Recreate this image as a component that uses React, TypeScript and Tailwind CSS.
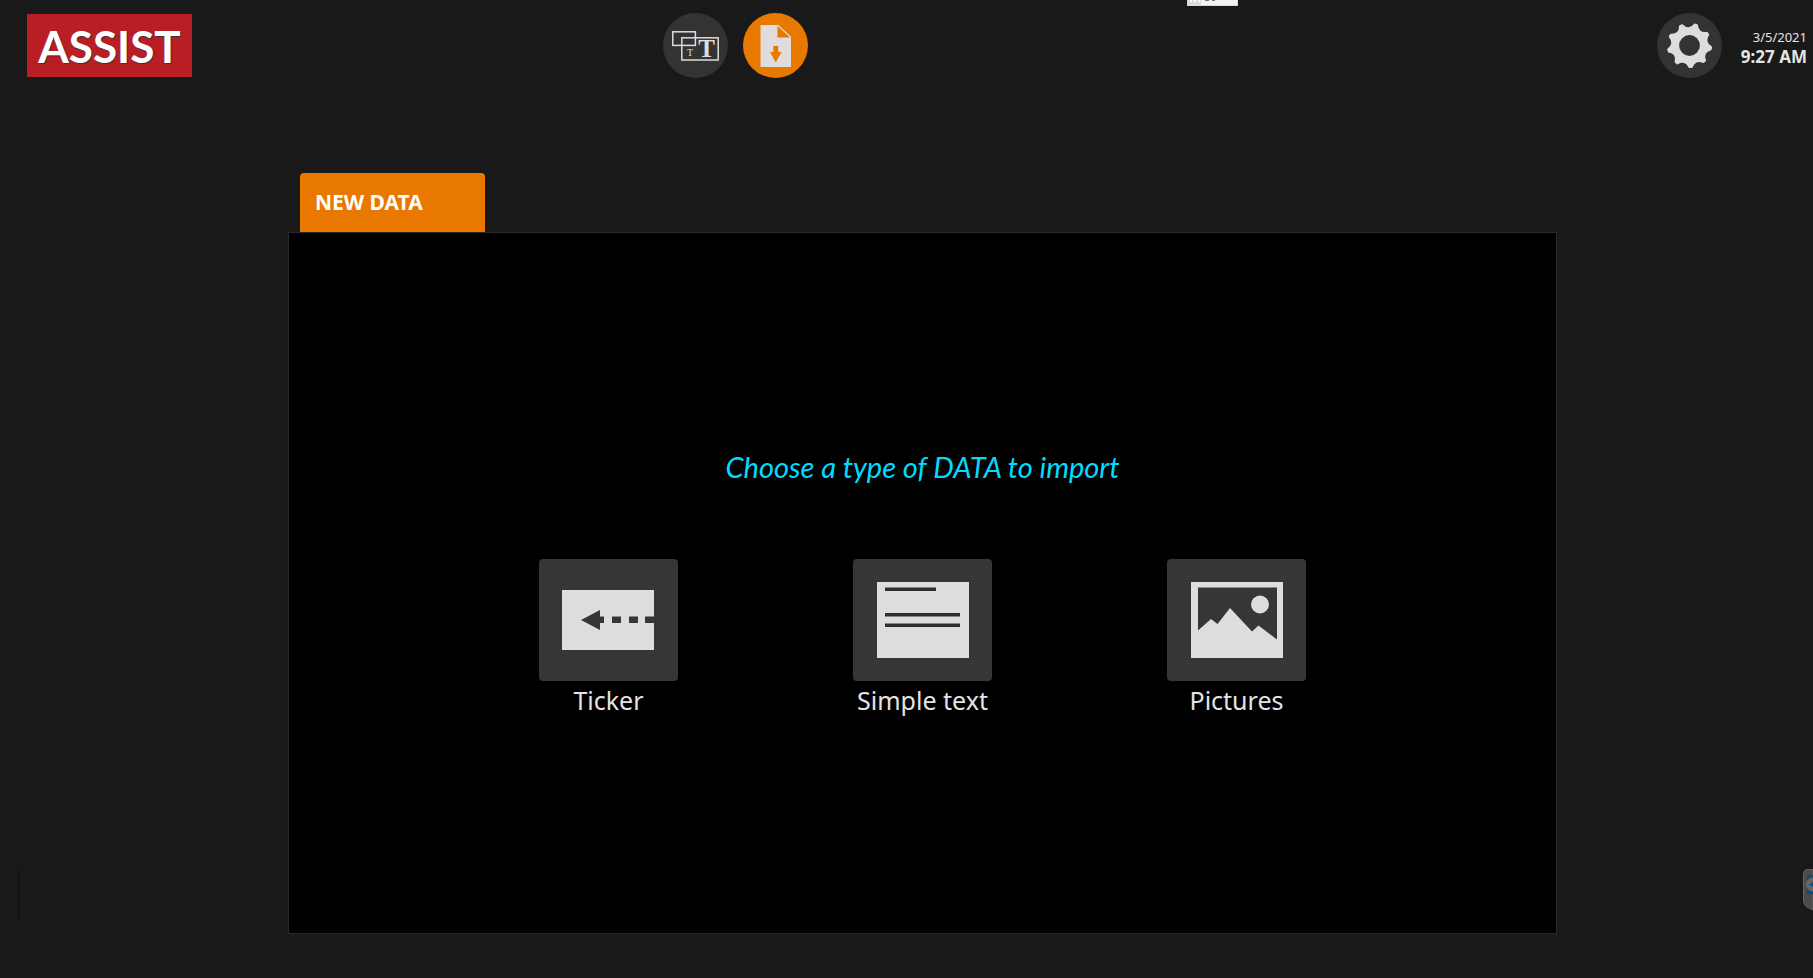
import type { ReactNode } from "react";

const GEAR_TEETH = 9;

function gearOutline(): string {
  const point = (degrees: number, radius: number) => {
    const a = (degrees * Math.PI) / 180;
    return `${(Math.cos(a) * radius).toFixed(2)} ${(Math.sin(a) * radius).toFixed(2)}`;
  };
  const step = 360 / GEAR_TEETH;
  let d = "";
  for (let i = 0; i < GEAR_TEETH; i++) {
    const tip = 87 + i * step;
    d += `${i === 0 ? "M" : "L"}${point(tip - 3, 21.6)}L${point(tip + 3, 21.6)}`;
    d += `C${point(tip + 12, 16.4)} ${point(tip + step - 12, 16.4)} ${point(tip + step - 3, 21.6)}`;
  }
  return d + "Z";
}

function LayersIcon() {
  return (
    <svg viewBox="0 0 65 65" className="size-full" aria-hidden="true">
      <g fill="none" stroke="#dedcdd" strokeWidth="1.5">
        <rect x="9.8" y="18.8" width="22.6" height="13.6" />
        <rect x="18.8" y="24.8" width="36.4" height="22.2" />
      </g>
      <g fill="#dedcdd" fontFamily="'Liberation Serif', serif" textAnchor="middle">
        <text x="27" y="43" fontSize="10">T</text>
        <text x="43.7" y="43.700" fontSize="25" fontWeight="bold">T</text>
      </g>
    </svg>
  );
}

function ImportIcon() {
  return (
    <svg viewBox="0 0 65 65" className="size-full" aria-hidden="true">
      <path d="M18 12H34.5V24.5H48V54H17.500V12Z" fill="#dedcdd" />
      <path d="M34.500 12L48 24.500" stroke="#dedcdd" strokeWidth="1.200" />
      <path d="M30.300 33H35.200V39H38.500L32.800 49.500L27 39H30.300Z" fill="#e87800" />
    </svg>
  );
}

function GearIcon() {
  return (
    <svg viewBox="-32.5 -32.5 65 65" className="size-full" aria-hidden="true">
      <path d={gearOutline()} fill="#dedcdd" stroke="#dedcdd" strokeWidth="2" strokeLinejoin="round" />
      <circle r="10.400" fill="#333333" />
    </svg>
  );
}

function TickerIcon() {
  return (
    <svg viewBox="0 0 139 122" className="size-full" aria-hidden="true">
      <rect x="23" y="31" width="92" height="60" fill="#dedcdd" />
      <path
        d="M42 61L61 51V57.500H65V64H61V71ZM73 57.500H82V64H73ZM90 57.500H99V64H90ZM106 57.500H115V64H106Z"
        fill="#363636"
      />
    </svg>
  );
}

function TextIcon() {
  return (
    <svg viewBox="0 0 139 122" className="size-full" aria-hidden="true">
      <rect x="24" y="23" width="92" height="76" fill="#dedcdd" />
      <path d="M32 28.500H83V32H32ZM32 54H107V57.500H32ZM32 64.500H107V68H32Z" fill="#302e2f" />
    </svg>
  );
}

function PictureIcon() {
  return (
    <svg viewBox="0 0 139 122" className="size-full" aria-hidden="true">
      <rect x="24" y="23" width="92" height="76" fill="#dedcdd" />
      <path d="M31 28.500H110V80.500L91.500 66.500L85 72.500L63 49L50.500 65L44 60L31 71.500Z" fill="#363636" />
      <circle cx="93" cy="45.5" r="9" fill="#dedcdd" />
    </svg>
  );
}

function RoundButton({ label, active, children }: { label: string; active?: boolean; children: ReactNode }) {
  return (
    <button
      type="button"
      aria-label={label}
      className={`size-[65px] shrink-0 overflow-hidden rounded-full ${active ? "bg-[#e87800]" : "bg-[#333333]"}`}
    >
      {children}
    </button>
  );
}

function DataType({ label, children }: { label: string; children: ReactNode }) {
  return (
    <button type="button" className="flex w-[139px] flex-col items-center text-[#e4e4e4]">
      <span className="h-[122px] w-full overflow-hidden rounded bg-[#363636]">{children}</span>
      <span className="whitespace-nowrap text-[25px] leading-[38px]">{label}</span>
    </button>
  );
}

export default function App() {
  return (
    <div className="relative flex min-h-screen flex-col overflow-hidden bg-[#191919] font-['Noto_Sans','Open_Sans',sans-serif]">
      <header className="grid grid-cols-[663fr_145px_1005fr] items-center pt-[13px]">
        <div className="pl-[27px]">
          <h1 className="flex h-[63px] w-[165px] items-center justify-center bg-[#ba1e25] font-['Lato',sans-serif] text-[44px] leading-none font-bold text-white [text-shadow:1px_1px_1px_#333]">
            ASSIST
          </h1>
        </div>
        <nav className="flex justify-between">
          <RoundButton label="Layouts">
            <LayersIcon />
          </RoundButton>
          <RoundButton label="Import data" active>
            <ImportIcon />
          </RoundButton>
        </nav>
        <div className="flex items-center justify-end gap-4 pr-[6px]">
          <RoundButton label="Settings">
            <GearIcon />
          </RoundButton>
          <div className="flex w-[69px] flex-col items-end pt-0.5 whitespace-nowrap text-[#e4e4e4]">
            <p className="text-[13px] leading-5">3/5/2021</p>
            <p className="text-[17px] leading-5 font-bold">9:27 AM</p>
          </div>
        </div>
      </header>

      <main className="grid flex-1 grid-cols-[288fr_1269fr_256fr] pt-[95px] pb-11">
        <section className="col-start-2 flex flex-col">
          <h2 className="ml-3 flex h-[59px] w-[185px] items-center rounded-t bg-[#e87800] px-[15px] text-[21px] font-bold text-white">
            NEW DATA
          </h2>
          <div className="flex flex-1 flex-col items-center border border-[#2a2a2a] bg-black pt-[214px]">
            <p className="font-['Lato',sans-serif] text-[29px] leading-10 text-[#00dcff] italic">
              Choose a type of DATA to import
            </p>
            <div className="mt-[72px] flex gap-[175px]">
              <DataType label="Ticker">
                <TickerIcon />
              </DataType>
              <DataType label="Simple text">
                <TextIcon />
              </DataType>
              <DataType label="Pictures">
                <PictureIcon />
              </DataType>
            </div>
          </div>
        </section>
      </main>

      <div className="absolute top-0 left-[1187px] h-[6px] w-[51px] overflow-hidden" aria-hidden="true">
        <svg viewBox="0 0 51 6" className="size-full">
          <path d="M0 0H51V6H0Z" fill="#dadcdc" />
          <path d="M14 0H50V5H14Z" fill="#f3f3f3" />
          <path d="M3 0H5V2H3ZM7 0H9V2H7ZM11 0H13V2H11Z" fill="#ffffff" />
          <path d="M18 0H22V1H18ZM25 0H28V1H25Z" fill="#777777" />
        </svg>
      </div>
      <div className="absolute top-[869px] left-[18px] h-[50px] w-px bg-[#0e0e0e]" aria-hidden="true" />
      <div className="absolute top-[869px] right-0 h-[42px] w-[10px]" aria-hidden="true">
        <svg viewBox="0 0 10 42" className="size-full">
          <path d="M10 .5H4Q.5 1 .5 5V31Q.5 36 4 38L10 41Z" fill="#4c4c4c" stroke="#626262" />
          <path d="M4 6H10V25H4Z" fill="#0b4c7c" />
          <path d="M10 8.500A7 7 0 0 0 10 22.500Z" fill="#666666" />
          <path d="M6.500 15.500L10 13V18Z" fill="#0b4c7c" />
        </svg>
      </div>
    </div>
  );
}
